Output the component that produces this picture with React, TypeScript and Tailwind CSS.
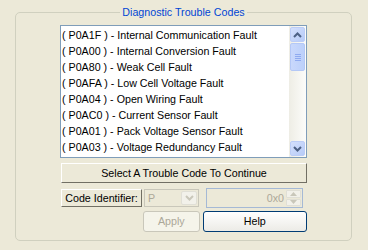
const codes = [
  ["P0A1F", "Internal Communication Fault"],
  ["P0A00", "Internal Conversion Fault"],
  ["P0A80", "Weak Cell Fault"],
  ["P0AFA", "Low Cell Voltage Fault"],
  ["P0A04", "Open Wiring Fault"],
  ["P0AC0", "Current Sensor Fault"],
  ["P0A01", "Pack Voltage Sensor Fault"],
  ["P0A03", "Voltage Redundancy Fault"],
];

function Chevron({ up, color = "#4d6185" }: { up?: boolean; color?: string }) {
  return (
    <svg width="9" height="6" viewBox="0 0 9 6">
      <polyline
        points={up ? "1,5 4.5,1.5 8,5" : "1,1 4.5,4.5 8,1"}
        fill="none"
        stroke={color}
        strokeWidth="2"
      />
    </svg>
  );
}

function ScrollButton({ up }: { up?: boolean }) {
  return (
    <div className="h-[17px] p-[1px]">
      <div className="h-full rounded-[2px] border border-[#bccdf7] bg-gradient-to-br from-[#d4e0fd] to-[#b7cbf7] flex items-center justify-center">
        <Chevron up={up} />
      </div>
    </div>
  );
}

function Scrollbar() {
  return (
    <div className="w-[17px] flex flex-col bg-gradient-to-r from-[#eeede5] to-[#fcfcfa]">
      <ScrollButton up />
      <div className="h-[28px] px-[1px]">
        <div className="h-full rounded-[2px] border border-[#b4c8f6] bg-gradient-to-r from-[#c9d8fc] to-[#bcd0fa] flex flex-col items-center justify-center gap-[1px]">
          <div className="w-[6px] h-[1px] bg-[#8faaf0]" />
          <div className="w-[6px] h-[1px] bg-[#8faaf0]" />
          <div className="w-[6px] h-[1px] bg-[#8faaf0]" />
          <div className="w-[6px] h-[1px] bg-[#8faaf0]" />
        </div>
      </div>
      <div className="flex-1" />
      <ScrollButton />
    </div>
  );
}

export default function App() {
  return (
    <div
      className="w-[368px] h-[250px] bg-[#ece9d8] pt-[12px] pl-[15px] text-[10.7px] text-black"
      style={{ fontFamily: '"Liberation Sans", Arial, sans-serif' }}
    >
      <div className="w-[337px] h-[229px] border border-[#d0d0bf] rounded-[5px]">
        <div className="-mt-[8px] h-[14px] flex justify-center">
          <span className="bg-[#ece9d8] px-[2px] leading-[14px] text-[#0046d5]">
            Diagnostic Trouble Codes
          </span>
        </div>
        <div className="ml-[44px] w-[247px] mt-[6px]">
          <div className="h-[133px] border border-[#7f9db9] bg-white flex">
            <div className="flex-1 overflow-hidden pl-[1px] pt-[1px]">
              {codes.map(([c, d]) => (
                <div key={c} className="h-[16px] leading-[16px] whitespace-nowrap">
                  ( {c} ) - {d}
                </div>
              ))}
            </div>
            <Scrollbar />
          </div>

          <div className="mt-[5px] ml-[1px] h-[20px] border border-t-white border-l-white border-r-[#716f64] border-b-[#716f64] flex items-center justify-center">
            Select A Trouble Code To Continue
          </div>

          <div className="mt-[5px] ml-[1px] flex items-center">
            <div className="w-[81px] h-[18px] border border-t-white border-l-white border-r-[#716f64] border-b-[#716f64] flex items-center justify-center">
              Code Identifier:
            </div>
            <div className="ml-[2px] w-[55px] h-[18px] border border-[#c9c7ba] flex items-center">
              <span className="flex-1 pl-[3px] text-[#aca899]">P</span>
              <div className="w-[16px] h-[14px] mr-[1px] rounded-[2px] bg-[#f2f1ea] border border-[#e0dfd6] flex items-center justify-center">
                <Chevron color="#c9c7ba" />
              </div>
            </div>
            <div className="ml-[7px] w-[97px] h-[20px] border border-[#a5b9d5] flex items-center">
              <span className="flex-1 text-right pr-[2px] text-[#aca899]">0x0</span>
              <div className="w-[15px] h-[16px] mr-[1px] flex flex-col gap-[1px]">
                <div className="flex-1 rounded-[1px] bg-[#f2f1ea] border border-[#e0dfd6] flex items-center justify-center">
                  <svg width="7" height="4" viewBox="0 0 7 4">
                    <polygon points="0,4 3.5,0 7,4" fill="#c9c7ba" />
                  </svg>
                </div>
                <div className="flex-1 rounded-[1px] bg-[#f2f1ea] border border-[#e0dfd6] flex items-center justify-center">
                  <svg width="7" height="4" viewBox="0 0 7 4">
                    <polygon points="0,0 3.5,4 7,0" fill="#c9c7ba" />
                  </svg>
                </div>
              </div>
            </div>
          </div>

          <div className="mt-[3px] ml-[83px] flex gap-[3px]">
            <div className="w-[57px] h-[21px] rounded-[3px] border border-[#c9c7ba] bg-[#f5f4ea] text-[#aca899] flex items-center justify-center">
              Apply
            </div>
            <div className="w-[105px] h-[21px] rounded-[3px] border border-[#003c74] bg-gradient-to-b from-white to-[#ecebe6] flex items-center justify-center">
              Help
            </div>
          </div>
        </div>
      </div>
    </div>
  );
}
